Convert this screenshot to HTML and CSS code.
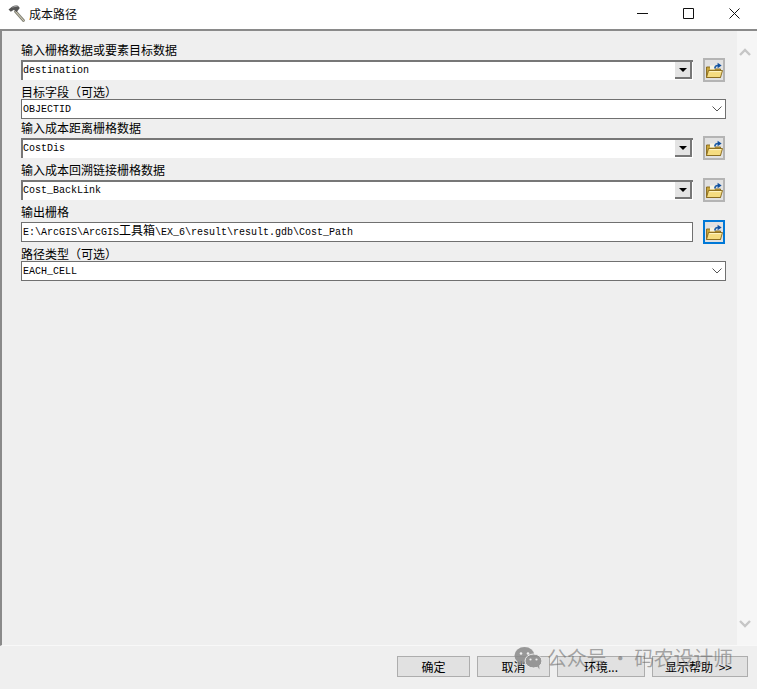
FILE: index.html
```html
<!DOCTYPE html>
<html lang="zh">
<head>
<meta charset="utf-8">
<title>成本路径</title>
<link rel="stylesheet" href="styles.css">
</head>
<body>
<svg class="defs" width="0" height="0" aria-hidden="true">
  <symbol id="folder" viewBox="0 0 18 18">
    <path d="M1.5 6V16.5H15.5V8H9L7.5 6Z" fill="#c9a63c" stroke="#86681c" stroke-width=".9"/>
    <path d="M5 4.5H10V8.5H5Z" fill="#f6f3e2"/>
    <path d="M1.5 16.5L3.5 9.5H17.5L15.5 16.5Z" fill="#f5dc80" stroke="#86681c" stroke-width=".9" stroke-linejoin="round"/>
    <path d="M4.4 10.6H16.2" stroke="#fff5c8" stroke-width="1"/>
    <path d="M9.8 7.5C9.8 5.6 10.8 4.5 13 4.5" fill="none" stroke="#1f5fa8" stroke-width="1.6"/>
    <path d="M12.6 1.8L16.6 4.5L12.6 7.2Z" fill="#0f4f9e"/>
  </symbol>
  <symbol id="chev" viewBox="0 0 10 6">
    <path d="M.5 .5L5 5L9.5 .5" fill="none" stroke="#555" stroke-width="1"/>
  </symbol>
  <symbol id="scrollchev" viewBox="0 0 12 8">
    <path d="M1 7L6 2L11 7" fill="none" stroke="#c6c6c6" stroke-width="2.4"/>
  </symbol>
</svg>

<div class="window">
  <header class="titlebar">
    <svg class="hammer" width="17" height="17" viewBox="0 0 17 17">
      <path d="M7.5 6.5L15.5 15.5" stroke="#85857a" stroke-width="2.8" stroke-linecap="round"/>
      <path d="M7.5 6.5L15.5 15.5" stroke="#d9d3bb" stroke-width="1" stroke-linecap="round"/>
      <path d="M.5 4.5L4 1.8C6 .4 8 .2 10 .8L11.8 3L8.5 7.2L6 4.8L2.8 6.8Z" fill="#565656"/>
      <path d="M4.5 2.4C6 1.4 8 1.2 9.5 1.6" stroke="#ababab" stroke-width=".9" fill="none"/>
    </svg>
    <span class="title-text">成本路径</span>
    <div class="winctl">
      <svg width="11" height="11" viewBox="0 0 11 11"><path d="M0 5.5H11" stroke="#111" stroke-width="1"/></svg>
      <svg width="11" height="11" viewBox="0 0 11 11"><path d="M.5 .5H10.5V10.5H.5Z" fill="none" stroke="#111" stroke-width="1"/></svg>
      <svg width="11" height="11" viewBox="0 0 11 11"><path d="M.5 .5L10.5 10.5M10.5 .5L.5 10.5" stroke="#111" stroke-width="1"/></svg>
    </div>
  </header>

  <div class="body">
    <main class="panel">
      <section class="field field-first">
        <div class="label label-gap">输入栅格数据或要素目标数据</div>
        <div class="row">
          <div class="combo"><span class="value">destination</span><span class="arrow"></span></div>
          <button class="browse" type="button"><svg width="18" height="18"><use href="#folder"/></svg></button>
        </div>
      </section>

      <section class="field field-select">
        <div class="label">目标字段（可选）</div>
        <div class="select"><span class="value">OBJECTID</span><svg class="chevron" width="10" height="6"><use href="#chev"/></svg></div>
      </section>

      <section class="field field-tight">
        <div class="label label-gap-lg">输入成本距离栅格数据</div>
        <div class="row">
          <div class="combo"><span class="value">CostDis</span><span class="arrow"></span></div>
          <button class="browse" type="button"><svg width="18" height="18"><use href="#folder"/></svg></button>
        </div>
      </section>

      <section class="field">
        <div class="label label-gap">输入成本回溯链接栅格数据</div>
        <div class="row">
          <div class="combo"><span class="value">Cost_BackLink</span><span class="arrow"></span></div>
          <button class="browse" type="button"><svg width="18" height="18"><use href="#folder"/></svg></button>
        </div>
      </section>

      <section class="field">
        <div class="label label-gap">输出栅格</div>
        <div class="row">
          <div class="textbox"><span class="value">E:\ArcGIS\ArcGIS<span class="cjk">工具箱</span>\EX_6\result\result.gdb\Cost_Path</span></div>
          <button class="browse browse-focus" type="button"><svg width="18" height="18"><use href="#folder"/></svg></button>
        </div>
      </section>

      <section class="field">
        <div class="label label-overlap">路径类型（可选）</div>
        <div class="select"><span class="value">EACH_CELL</span><svg class="chevron" width="10" height="6"><use href="#chev"/></svg></div>
      </section>
    </main>
    <aside class="scrollbar">
      <svg width="12" height="8"><use href="#scrollchev"/></svg>
      <svg class="flip" width="12" height="8"><use href="#scrollchev"/></svg>
    </aside>
  </div>

  <footer class="footer">
    <button class="btn btn-ok" type="button">确定</button>
    <button class="btn btn-ok" type="button">取消</button>
    <button class="btn btn-env" type="button">环境...</button>
    <button class="btn btn-help" type="button">显示帮助 &gt;&gt;</button>
  </footer>

  <div class="watermark">
    <svg width="28" height="24" viewBox="0 0 28 24">
      <ellipse cx="10.5" cy="9.5" rx="10" ry="8.5" fill="#8a8a8a"/>
      <path d="M4 15L3.5 20L9 16.5Z" fill="#8a8a8a"/>
      <circle cx="7" cy="7.5" r="1.3" fill="#efefef"/>
      <circle cx="14" cy="7.5" r="1.3" fill="#efefef"/>
      <ellipse cx="19.5" cy="15" rx="8.5" ry="7" fill="#8a8a8a" stroke="#efefef" stroke-width="1"/>
      <path d="M23 20L25.5 23.5L25 18Z" fill="#8a8a8a"/>
      <circle cx="16.5" cy="13.5" r="1.1" fill="#efefef"/>
      <circle cx="22.5" cy="13.5" r="1.1" fill="#efefef"/>
    </svg>
    <span>公众号 · 码农设计师</span>
  </div>
</div>
</body>
</html>
```

FILE: styles.css
```css
* { box-sizing: border-box; }

html, body {
  margin: 0;
  padding: 0;
  background: #efefef;
}

.defs { position: absolute; }

.window {
  position: relative;
  width: 757px;
  height: 689px;
  display: flex;
  flex-direction: column;
  overflow: hidden;
  font-family: "Noto Sans CJK SC", "Liberation Sans", sans-serif;
  font-size: 12px;
  color: #000;
}

/* Title bar */
.titlebar {
  height: 29px;
  flex: none;
  background: #fff;
  display: flex;
  align-items: center;
  padding: 0 0 2px 8px;
}

.hammer { margin-right: 4px; flex: none; }

.title-text { line-height: 16px; color: #111; }

.winctl {
  margin-left: auto;
  display: flex;
  gap: 35px;
  padding-right: 17px;
}

/* Main area */
.body {
  flex: none;
  height: 617px;
  display: flex;
  border-top: 2px solid #8a8a8a;
  border-left: 2px solid #8a8a8a;
  border-bottom: 1px solid #f8f8f8;
}

.panel {
  flex: 1;
  padding: 12px 0 0 19px;
  background: #efefef;
}

.scrollbar {
  width: 20px;
  flex: none;
  background: #f6f6f6;
  display: flex;
  flex-direction: column;
  justify-content: space-between;
  align-items: center;
  padding: 17px 4px 17px 0;
}

.flip { transform: rotate(180deg); }

/* Fields */
.field { margin-top: 5px; }
.field-first { margin-top: 0; }
.field-select { margin-top: 4px; }
.field-tight { margin-top: 1px; }

.label {
  height: 15px;
  line-height: 15px;
  white-space: nowrap;
}

.label-gap { margin-bottom: 2px; line-height: 13px; }
.label-gap-lg { margin-bottom: 3px; }
.label-overlap { margin-bottom: -1px; line-height: 13px; }

.row {
  display: flex;
  align-items: center;
  gap: 10px;
  width: 705px;
}

.value {
  font-family: "Liberation Mono", "Noto Sans CJK SC", monospace;
  font-size: 10px;
  line-height: 14px;
  white-space: nowrap;
}

.cjk {
  font-family: "Noto Sans CJK SC", sans-serif;
  font-size: 12px;
  line-height: 1;
}

.combo {
  width: 672px;
  height: 20px;
  flex: none;
  background: #fff;
  border-top: 2px solid #777;
  border-left: 2px solid #777;
  display: flex;
  align-items: flex-start;
  justify-content: space-between;
  padding-right: 1px;
}

.combo .value { margin-top: 2px; }

.arrow {
  width: 17px;
  height: 17px;
  background: #e4e4e4;
  border-right: 2px solid #777;
  border-bottom: 2px solid #777;
  display: flex;
  align-items: center;
  justify-content: center;
}

.arrow::after {
  content: "";
  width: 0;
  height: 0;
  border-left: 4px solid transparent;
  border-right: 4px solid transparent;
  border-top: 4px solid #000;
}

.textbox {
  width: 672px;
  height: 20px;
  flex: none;
  background: #fff;
  border: 1px solid #707070;
  padding: 1px 0 0 1px;
  display: flex;
  align-items: flex-start;
}

.select {
  width: 705px;
  height: 20px;
  background: #fff;
  border: 1px solid #707070;
  padding: 2px 0 0 1px;
  display: flex;
  align-items: center;
  justify-content: space-between;
}

.chevron { margin: -2px 3px 0 0; }

.browse {
  width: 22px;
  height: 24px;
  flex: none;
  margin: -2px 0;
  padding: 0;
  background: #e1e1e1;
  border: 2px solid #b4b4b4;
  display: flex;
  align-items: center;
  justify-content: center;
}

.browse-focus {
  border-color: #0078d7;
}

/* Footer */
.footer {
  flex: 1;
  display: flex;
  justify-content: flex-end;
  gap: 7px;
  padding: 10px 9px 0 0;
  background: #efefef;
}

.btn {
  height: 21px;
  padding: 0;
  font: inherit;
  color: #000;
  background: #e1e1e1;
  border: 1px solid #adadad;
  line-height: 19px;
  white-space: nowrap;
}

.btn-ok { width: 73px; }
.btn-env { width: 88px; }
.btn-help { width: 96px; word-spacing: 3px; padding-right: 3px; }

/* Watermark overlaid on the footer */
.watermark {
  position: absolute;
  left: 514px;
  top: 646px;
  display: flex;
  align-items: center;
  gap: 5px;
  color: rgba(105, 105, 105, 0.56);
  font-size: 20px;
  letter-spacing: -0.3px;
  line-height: 24px;
  white-space: nowrap;
  pointer-events: none;
}

.watermark svg { opacity: .85; }
```
